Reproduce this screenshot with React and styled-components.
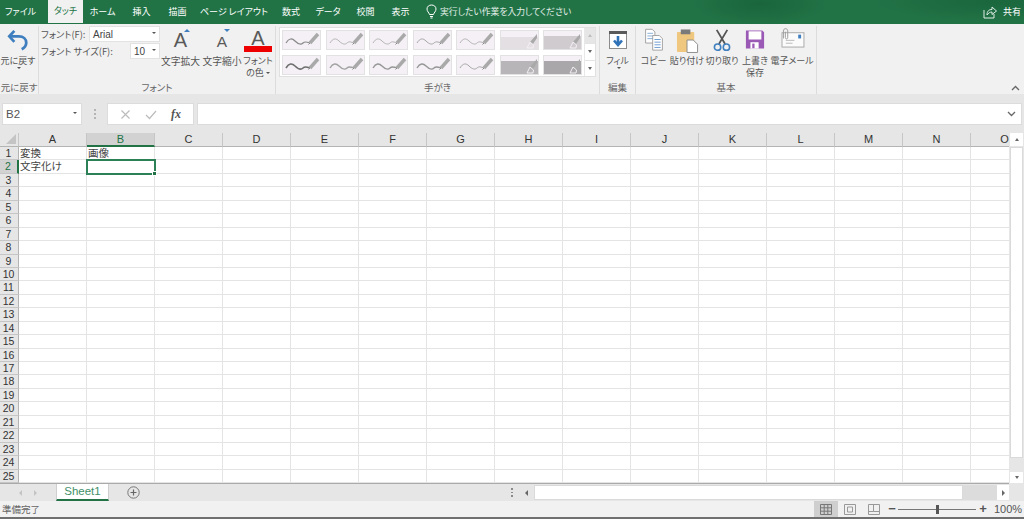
import React from "react";
import styled, { createGlobalStyle } from "styled-components";

const GlobalStyle = createGlobalStyle`
  html, body { margin: 0; padding: 0; overflow: hidden; background: #f1f1f1; }
  * { box-sizing: border-box; }
`;

const JP = `"Noto Sans CJK JP", "Noto Sans", sans-serif`;
const GREEN = "#217346";
const COL_W = 68;
const ROW_H = 13.44;

const Page = styled.div`
  width: 1024px;
  height: 519px;
  display: flex;
  flex-direction: column;
  overflow: hidden;
  font-family: ${JP};
  font-feature-settings: "palt";
  color: #555;
`;

/* title + tabs */
const TabBar = styled.div`
  height: 24px;
  flex: none;
  display: flex;
  align-items: stretch;
  color: #fff;
  font-size: 9px;
  background:
    radial-gradient(ellipse 70px 22px at 760px 4px, rgba(0, 50, 25, 0.22), transparent),
    radial-gradient(ellipse 120px 20px at 990px 2px, rgba(0, 50, 25, 0.2), transparent),
    ${GREEN};
`;
const Tab = styled.div`
  width: ${(p) => p.$w}px;
  margin-right: ${(p) => p.$mr || 0}px;
  padding-bottom: 2px;
  display: flex;
  align-items: center;
  justify-content: center;
  ${(p) => p.$active && `background:#f1f1f1;color:${GREEN};margin-bottom:1px;`}
`;
const TellMe = styled.div`
  display: flex;
  align-items: center;
  gap: 3px;
  margin-left: 8px;
  padding-bottom: 1px;
  font-size: 8.8px;
  color: #e4efe9;
`;
const Share = styled.div`
  margin-left: auto;
  padding: 0 3px 1px 0;
  display: flex;
  align-items: center;
  gap: 6px;
`;

/* ribbon */
const Ribbon = styled.div`
  height: 70px;
  flex: none;
  display: flex;
  background: #f1f1f1;
  position: relative;
`;
const Group = styled.div`
  width: ${(p) => p.$w}px;
  flex: none;
  display: flex;
  flex-direction: column;
  margin-top: 2px;
  border-right: 1px solid #dcdcdc;
`;
const GroupBody = styled.div`
  flex: 1;
  display: flex;
  min-height: 0;
  padding-left: ${(p) => p.$pl || 0}px;
`;
const GroupLabel = styled.div`
  height: 14px;
  font-size: 9.5px;
  line-height: 14px;
  text-align: center;
  color: #666;
`;
const BigButton = styled.div`
  width: ${(p) => p.$w}px;
  flex: none;
  display: flex;
  flex-direction: column;
  align-items: center;
  font-size: ${(p) => p.$fs || 9}px;
  line-height: 12px;
  text-align: center;
  white-space: nowrap;
  color: #555;
`;
const IconSlot = styled.div`
  height: 29px;
  flex: none;
  align-self: stretch;
  padding-top: ${(p) => p.$pt || 0}px;
  display: flex;
  align-items: flex-start;
  justify-content: center;
  position: relative;
`;
const Caret = styled.span`
  display: inline-block;
  width: 0;
  height: 0;
  margin: 0 0 2px 2px;
  border: 2px solid transparent;
  border-top: 2.5px solid #555;
  border-bottom: 0;
`;
const FontForm = styled.div`
  width: 121px;
  flex: none;
  padding-left: 2px;
  display: flex;
  flex-direction: column;
  gap: 1px;
`;
const FormRow = styled.div`
  height: 16px;
  display: flex;
  align-items: center;
  justify-content: space-between;
  font-size: 9.3px;
  white-space: nowrap;
`;
const Select = styled.div`
  width: ${(p) => p.$w}px;
  height: 16px;
  background: #fff;
  border: 1px solid #e2e2e2;
  display: flex;
  align-items: center;
  justify-content: space-between;
  padding: 0 3px;
  font: 10px "Liberation Sans", sans-serif;
  color: #444;
`;
const LetterA = styled.div`
  font: 500 ${(p) => p.$size}px/1 "Liberation Sans", sans-serif;
  color: #595959;
  position: relative;
`;
const Pointer = styled.span`
  position: absolute;
  top: ${(p) => p.$top}px;
  right: -3px;
  width: 0;
  height: 0;
  border: 3px solid transparent;
  ${(p) => (p.$up ? "border-top:0;border-bottom:3px solid #3f7fbf;" : "border-bottom:0;border-top:3px solid #3f7fbf;")}
`;
const RedBar = styled.div`
  position: absolute;
  left: 1px;
  right: 1px;
  top: 20px;
  height: 6px;
  background: #ee0000;
`;
const Gallery = styled.div`
  margin: 1px 0 2px 3px;
  width: 317px;
  height: 50px;
  background: #fff;
  border: 1px solid #e0e0e0;
  display: flex;
`;
const SwatchGrid = styled.div`
  width: 304px;
  padding: 2px 0 0 2px;
  display: grid;
  grid-template-columns: repeat(7, 39px);
  grid-template-rows: 20px 20px;
  column-gap: 4.5px;
  row-gap: 5px;
`;
const Swatch = styled.svg`
  display: block;
  width: 39px;
  height: 20px;
  background: #f4f0f5;
  border: 1px solid #e2e2e2;
`;
const GalleryScroll = styled.div`
  flex: 1;
  display: flex;
  flex-direction: column;
  border-left: 1px solid #e8e8e8;
`;
const GalleryBtn = styled.div`
  flex: 1;
  display: flex;
  align-items: center;
  justify-content: center;
  background: ${(p) => (p.$off ? "#e6e6e6" : "#fff")};
  border-bottom: 1px solid #e4e4e4;
  &:last-child { border-bottom: 0; }
`;
const Tri = styled.span`
  width: 0;
  height: 0;
  border-left: 2.5px solid transparent;
  border-right: 2.5px solid transparent;
  ${(p) => (p.$up ? `border-bottom:3px solid ${p.$c || "#666"};` : `border-top:3px solid ${p.$c || "#666"};`)}
`;
const Collapse = styled.svg`
  position: absolute;
  right: 4px;
  bottom: 3px;
`;

/* formula bar */
const FormulaBar = styled.div`
  height: 39px;
  flex: none;
  display: flex;
  background: #e6e6e6;
  padding: 9px 2px 8px 2px;
  align-items: stretch;
`;
const NameBox = styled.div`
  width: 80px;
  background: #fff;
  border: 1px solid #dcdcdc;
  display: flex;
  align-items: center;
  justify-content: space-between;
  padding: 0 4px 0 3px;
  font: 11.5px "Liberation Sans", sans-serif;
  color: #555;
`;
const Dots = styled.div`
  width: 25px;
  display: flex;
  flex-direction: column;
  align-items: center;
  justify-content: center;
  gap: 2px;
  & > i { width: 2px; height: 2px; background: #b4b4b4; display: block; }
`;
const FxBox = styled.div`
  width: 87px;
  background: #fff;
  border: 1px solid #dcdcdc;
  display: flex;
  align-items: center;
  justify-content: space-around;
  padding: 0 5px;
`;
const FxText = styled.span`
  font: italic 700 12px "Liberation Serif", serif;
  color: #555;
`;
const FormulaInput = styled.div`
  flex: 1;
  margin-left: 3px;
  background: #fff;
  border: 1px solid #dcdcdc;
  display: flex;
  align-items: center;
  justify-content: flex-end;
  padding-right: 5px;
`;

/* sheet */
const SheetArea = styled.div`
  height: 351px;
  flex: none;
  display: flex;
  background: #fff;
`;
const Cells = styled.div`
  width: 1009px;
  flex: none;
  overflow: hidden;
  display: grid;
  grid-template-columns: 19px repeat(15, ${COL_W}px);
  grid-template-rows: 14px repeat(25, ${ROW_H}px);
  border-bottom: 1px solid #aaa;
`;
const Corner = styled.div`
  background: #e6e6e6;
  border-right: 1px solid #c6c6c6;
  border-bottom: 1px solid #b4b4b4;
  position: relative;
  &::after {
    content: "";
    position: absolute;
    right: 2px;
    bottom: 2px;
    border-left: 10px solid transparent;
    border-bottom: 10px solid #c4c4c4;
  }
`;
const ColHead = styled.div`
  background: ${(p) => (p.$sel ? "#d2d2d2" : "#e6e6e6")};
  color: ${(p) => (p.$sel ? GREEN : "#333")};
  border-right: 1px solid #c6c6c6;
  border-bottom: ${(p) => (p.$sel ? `2px solid ${GREEN}` : "1px solid #b4b4b4")};
  font: 11px/13px "Liberation Sans", sans-serif;
  text-align: center;
`;
const RowHead = styled.div`
  background: ${(p) => (p.$sel ? "#d2d2d2" : "#e6e6e6")};
  color: ${(p) => (p.$sel ? GREEN : "#333")};
  border-right: ${(p) => (p.$sel ? `2px solid ${GREEN}` : "1px solid #b4b4b4")};
  border-bottom: 1px solid #c6c6c6;
  font: 500 10.5px/13px "Liberation Sans", sans-serif;
  text-align: center;
  padding-right: 1px;
  overflow: hidden;
`;
const Cell = styled.div`
  border-right: 1px solid #e4e4e4;
  border-bottom: 1px solid #e4e4e4;
  font-size: 10.5px;
  line-height: 12px;
  padding-left: 1px;
  color: #444;
  white-space: nowrap;
  position: relative;
  ${(p) => p.$sel && `outline:2px solid #2c8055;outline-offset:-1px;z-index:1;`}
`;
const Handle = styled.span`
  position: absolute;
  right: -3px;
  bottom: -3px;
  width: 5px;
  height: 5px;
  background: ${GREEN};
  border: 1px solid #fff;
`;
const VScroll = styled.div`
  flex: 1;
  display: flex;
  flex-direction: column;
  background: #e6e6e6;
  padding: 0 1px;
`;
const VBtn = styled.div`
  height: ${(p) => p.$h}px;
  background: #fff;
  display: flex;
  align-items: center;
  justify-content: center;
  border-bottom: 1px solid #e6e6e6;
`;
const VThumb = styled.div`
  height: 311px;
  background: #fff;
  border: 1px solid #dadada;
`;
const VGap = styled.div`
  flex: 1;
`;

/* tabs row */
const SheetBar = styled.div`
  height: 17px;
  flex: none;
  display: flex;
  align-items: stretch;
  background: #e6e6e6;
`;
const NavArrows = styled.div`
  width: 56px;
  display: flex;
  align-items: center;
  justify-content: center;
  gap: 12px;
`;
const NavTri = styled.span`
  width: 0;
  height: 0;
  border-top: 3px solid transparent;
  border-bottom: 3px solid transparent;
  ${(p) => (p.$left ? `border-right:3px solid ${p.$c};` : `border-left:3px solid ${p.$c};`)}
`;
const SheetTab = styled.div`
  width: 53px;
  background: #fff;
  color: #3f8f68;
  border-left: 1px solid #cfcfcf;
  border-right: 1px solid #cfcfcf;
  border-bottom: 2px solid ${GREEN};
  font: 11.5px/15px "Liberation Sans", sans-serif;
  text-align: center;
`;
const AddSheet = styled.div`
  width: 48px;
  display: flex;
  align-items: center;
  justify-content: center;
`;
const Splitter = styled.div`
  margin-left: 349px;
  width: 12px;
  display: flex;
  flex-direction: column;
  align-items: center;
  justify-content: center;
  gap: 2px;
  & > i { width: 1.5px; height: 1.5px; background: #8a8a8a; display: block; }
`;
const HScroll = styled.div`
  flex: 1;
  display: flex;
  align-items: stretch;
  padding: 1px 0;
`;
const HBtn = styled.div`
  width: ${(p) => p.$w}px;
  background: ${(p) => (p.$white ? "#fff" : "#e6e6e6")};
  display: flex;
  align-items: center;
  justify-content: center;
`;
const HThumb = styled.div`
  width: 429px;
  background: #fff;
  border: 1px solid #dadada;
`;
const HGap = styled.div`
  width: 34px;
  background: #dcdcdc;
`;
const HEnd = styled.div`
  flex: 1;
`;

/* status */
const StatusBar = styled.div`
  height: 16px;
  flex: none;
  display: flex;
  align-items: center;
  background: #f1f1f1;
  font-size: 9.5px;
  padding-left: 2px;
  color: #666;
`;
const ViewBtns = styled.div`
  margin-left: auto;
  height: 100%;
  display: flex;
`;
const ViewBtn = styled.div`
  width: 24px;
  display: flex;
  align-items: center;
  justify-content: center;
  background: ${(p) => (p.$sel ? "#cfcfcf" : "transparent")};
`;
const Zoom = styled.div`
  width: 138px;
  height: 100%;
  display: flex;
  align-items: center;
  padding-left: 1.5px;
  font: 11px "Liberation Sans", sans-serif;
  color: #555;
`;
const Slider = styled.div`
  width: 78px;
  height: 1px;
  margin: 0 2.5px 0 1.5px;
  background: #777;
  position: relative;
`;
const SliderThumb = styled.span`
  position: absolute;
  left: 38px;
  top: -4px;
  width: 3px;
  height: 9px;
  background: #555;
`;
const ZoomSign = styled.span`
  width: 9px;
  font-size: 13px;
  font-weight: 700;
  line-height: 14px;
  text-align: center;
  color: #555;
`;
const Percent = styled.span`
  margin-left: 6.5px;
`;
const BottomLine = styled.div`
  flex: 1;
  background: #6f6f6f;
`;

/* drawings */
const Undo = () => (
  <svg width="22" height="24" viewBox="0 0 24 26">
    <path d="M8 3 L2.5 9 L8 15" fill="none" stroke="#3f7fbf" strokeWidth="3" />
    <path d="M3 9 H13 C18 9 21 12 21 16 C21 19 19 21.5 16 23" fill="none" stroke="#3f7fbf" strokeWidth="3" />
  </svg>
);
const FillIcon = () => (
  <svg width="20" height="20" viewBox="0 0 20 20">
    <rect x="1.5" y="1.5" width="17" height="17" fill="#fff" stroke="#8c8c8c" />
    <rect x="1" y="1" width="18" height="3" fill="#5a5a5a" />
    <path d="M10 6 V14 M6 10.5 L10 15 L14 10.5" fill="none" stroke="#2f72b8" strokeWidth="2.6" />
  </svg>
);
const CopyIcon = () => (
  <svg width="20" height="23" viewBox="0 0 22 26">
    <path d="M1.5 1.5 H9 L12 4.5 V17 H1.5 Z" fill="#fff" stroke="#9a9a9a" />
    <path d="M3.5 6 H10 M3.5 9 H10 M3.5 12 H10" stroke="#7fa8d4" />
    <path d="M9.5 8.5 H17 L20.5 12 V25 H9.5 Z" fill="#fff" stroke="#9a9a9a" />
    <path d="M11.5 13 H18.5 M11.5 16 H18.5 M11.5 19 H18.5 M11.5 22 H18.5" stroke="#5f93cc" />
  </svg>
);
const PasteIcon = () => (
  <svg width="23" height="25" viewBox="0 0 24 26">
    <rect x="1" y="4" width="18" height="21" rx="1" fill="#f0c77f" />
    <rect x="5" y="1.5" width="10" height="5" fill="#7a7a7a" />
    <path d="M11.5 12.5 H18 L22.5 17 V25.5 H11.5 Z" fill="#fff" stroke="#8c8c8c" />
  </svg>
);
const ScissorsIcon = () => (
  <svg width="20" height="23" viewBox="0 0 22 26">
    <path d="M5 1 L14.5 17 M17 1 L7.5 17" stroke="#555" strokeWidth="2" fill="none" />
    <circle cx="6" cy="20.5" r="3.6" fill="none" stroke="#3f7fbf" strokeWidth="1.8" />
    <circle cx="16" cy="20.5" r="3.6" fill="none" stroke="#3f7fbf" strokeWidth="1.8" />
  </svg>
);
const SaveIcon = () => (
  <svg width="20" height="21" viewBox="0 0 22 22">
    <path d="M1 1 H19 L21 3 V21 H1 Z" fill="#9b59b6" />
    <rect x="4" y="2" width="14" height="9" fill="#fff" />
    <rect x="6" y="14" width="9" height="7" fill="#fff" />
    <rect x="8" y="15.5" width="2.5" height="5" fill="#9b59b6" />
  </svg>
);
const MailIcon = () => (
  <svg width="25" height="21" viewBox="0 0 26 22">
    <rect x="2" y="6" width="23" height="15" fill="#fbfbfb" stroke="#a8a8a8" />
    <rect x="19" y="8" width="3" height="4" fill="#3f7fbf" />
    <path d="M6 14 H15 M6 17 H13" stroke="#b8b8b8" />
    <path d="M3.5 12 V4 C3.5 1 8 1 8 4 V11 C8 13 5.5 13 5.5 11 V5" fill="none" stroke="#9a9a9a" />
  </svg>
);
const ShareIcon = () => (
  <svg width="14" height="14" viewBox="0 0 14 14">
    <path d="M1 5 V13 H11 V9" fill="none" stroke="#dfeee6" />
    <path d="M4 10 C4 6 6 4.5 9 4.5 V2 L13.5 6 L9 9.5 V7 C7 7 5.5 8 4 10 Z" fill="none" stroke="#dfeee6" />
  </svg>
);
const Bulb = () => (
  <svg width="11" height="15" viewBox="0 0 11 15">
    <path d="M3.5 10.5 C3 8.5 1 7.5 1 5 C1 2.5 3 1 5.5 1 C8 1 10 2.5 10 5 C10 7.5 8 8.5 7.5 10.5 Z" fill="none" stroke="#fff" />
    <path d="M4 12.5 H7 M4.5 14 H6.5" stroke="#fff" />
  </svg>
);

const WAVE = "M3 12 C6 7 9 7 12 10 C15 13 18 14 20 12 C22 10 24 11 27 12";

function PenSwatch({ color, width }) {
  return (
    <Swatch viewBox="0 0 37 18">
      <path d={WAVE} fill="none" stroke={color} strokeWidth={width} />
      <path d="M27 12 L35 3" stroke="#a9a9a9" strokeWidth="3.4" />
      <path d="M25.5 13.5 L27 12" stroke="#888" strokeWidth="1" />
    </Swatch>
  );
}
function MarkerSwatch({ color, top }) {
  return (
    <Swatch viewBox="0 0 37 18">
      <rect x="0" y={top} width="37" height={18 - top} fill={color} />
      <path d="M29 11 L36 3 L36 7 L32 13 Z" fill="#a9a9a9" />
      <path d="M26 17 L29 11 L32.5 14 L32 17 Z" fill="none" stroke="#f4f0f5" strokeWidth="1" />
    </Swatch>
  );
}

const PENS_TOP = [
  ["#8a8a8a", 1.2], ["#b4b4b4", 1], ["#b4b4b4", 1], ["#a6a6a6", 1], ["#b4b4b4", 1],
];
const PENS_BOTTOM = [
  ["#6e6e6e", 1.6], ["#a2a2a2", 1.4], ["#969696", 1.4], ["#969696", 1.4], ["#a6a6a6", 1],
];

const COLS = "ABCDEFGHIJKLMNO".split("");
const ROWS = Array.from({ length: 25 }, (_, i) => i + 1);
const CONTENT = { A1: "変換", B1: "画像", A2: "文字化け" };
const TABS = [
  ["ファイル", 41, 7],
  ["タッチ", 35, 0, true],
  ["ホーム", 39],
  ["挿入", 39],
  ["描画", 33],
  ["ページ レイアウト", 80],
  ["数式", 34],
  ["データ", 40],
  ["校閲", 35],
  ["表示", 35],
];

export default function App() {
  return (
    <Page>
      <GlobalStyle />
      <TabBar>
        {TABS.map(([name, w, mr, active]) => (
          <Tab key={name} $w={w} $mr={mr} $active={active}>{name}</Tab>
        ))}
        <TellMe>
          <Bulb />
          実行したい作業を入力してください
        </TellMe>
        <Share>
          <ShareIcon />
          共有
        </Share>
      </TabBar>

      <Ribbon>
        <Group $w={39}>
          <GroupBody>
            <BigButton $w={36}>
              <IconSlot $pt={2}><Undo /></IconSlot>
              元に戻す
              <Caret />
            </BigButton>
          </GroupBody>
          <GroupLabel>元に戻す</GroupLabel>
        </Group>

        <Group $w={237}>
          <GroupBody>
            <FontForm>
              <FormRow>
                フォント(F):
                <Select $w={71}>Arial<Caret /></Select>
              </FormRow>
              <FormRow>
                フォント サイズ(F):
                <Select $w={30}>10<Caret /></Select>
              </FormRow>
            </FontForm>
            <BigButton $w={41} $fs={9.8}>
              <IconSlot $pt={4}>
                <LetterA $size={20}>A<Pointer $up $top={-1} /></LetterA>
              </IconSlot>
              文字拡大
            </BigButton>
            <BigButton $w={42} $fs={9.8}>
              <IconSlot $pt={8}>
                <LetterA $size={15.5}>A<Pointer $top={-5} /></LetterA>
              </IconSlot>
              文字縮小
            </BigButton>
            <BigButton $w={30}>
              <IconSlot $pt={2}>
                <LetterA $size={20}>A</LetterA>
                <RedBar />
              </IconSlot>
              フォント
              <span>の色<Caret /></span>
            </BigButton>
          </GroupBody>
          <GroupLabel>フォント</GroupLabel>
        </Group>

        <Group $w={324}>
          <GroupBody>
            <Gallery>
              <SwatchGrid>
                {PENS_TOP.map(([c, w], i) => <PenSwatch key={i} color={c} width={w} />)}
                <MarkerSwatch color="#e3dfe2" top={6} />
                <MarkerSwatch color="#cfcbce" top={5} />
                {PENS_BOTTOM.map(([c, w], i) => <PenSwatch key={i} color={c} width={w} />)}
                <MarkerSwatch color="#b7b5b7" top={5} />
                <MarkerSwatch color="#a9a7a9" top={5} />
              </SwatchGrid>
              <GalleryScroll>
                <GalleryBtn $off><Tri $up $c="#bdbdbd" /></GalleryBtn>
                <GalleryBtn><Tri /></GalleryBtn>
                <GalleryBtn><Tri /></GalleryBtn>
              </GalleryScroll>
            </Gallery>
          </GroupBody>
          <GroupLabel>手がき</GroupLabel>
        </Group>

        <Group $w={36}>
          <GroupBody>
            <BigButton $w={35}>
              <IconSlot $pt={4}><FillIcon /></IconSlot>
              フィル
              <Caret />
            </BigButton>
          </GroupBody>
          <GroupLabel>編集</GroupLabel>
        </Group>

        <Group $w={181}>
          <GroupBody $pl={4}>
            <BigButton $w={27}>
              <IconSlot $pt={2}><CopyIcon /></IconSlot>
              コピー
            </BigButton>
            <BigButton $w={40}>
              <IconSlot $pt={2}><PasteIcon /></IconSlot>
              貼り付け
            </BigButton>
            <BigButton $w={30}>
              <IconSlot $pt={3}><ScissorsIcon /></IconSlot>
              切り取り
            </BigButton>
            <BigButton $w={36}>
              <IconSlot $pt={3}><SaveIcon /></IconSlot>
              上書き
              <span>保存</span>
            </BigButton>
            <BigButton $w={38}>
              <IconSlot $pt={1}><MailIcon /></IconSlot>
              電子メール
            </BigButton>
          </GroupBody>
          <GroupLabel>基本</GroupLabel>
        </Group>

        <Collapse width="9" height="6" viewBox="0 0 9 6">
          <path d="M1 5 L4.5 1.5 L8 5" fill="none" stroke="#666" strokeWidth="1.3" />
        </Collapse>
      </Ribbon>

      <FormulaBar>
        <NameBox>B2<Caret /></NameBox>
        <Dots><i /><i /><i /></Dots>
        <FxBox>
          <svg width="11" height="11" viewBox="0 0 11 11">
            <path d="M1.5 1.5 L9.5 9.5 M9.5 1.5 L1.5 9.5" stroke="#bcbcbc" strokeWidth="1.2" />
          </svg>
          <svg width="12" height="11" viewBox="0 0 12 11">
            <path d="M1 6 L4.5 9.5 L11 2" fill="none" stroke="#bcbcbc" strokeWidth="1.2" />
          </svg>
          <FxText>fx</FxText>
        </FxBox>
        <FormulaInput>
          <svg width="9" height="6" viewBox="0 0 9 6">
            <path d="M1 1 L4.5 4.5 L8 1" fill="none" stroke="#666" strokeWidth="1.3" />
          </svg>
        </FormulaInput>
      </FormulaBar>

      <SheetArea>
        <Cells>
          <Corner />
          {COLS.map((c) => <ColHead key={c} $sel={c === "B"}>{c}</ColHead>)}
          {ROWS.map((r) => (
            <React.Fragment key={r}>
              <RowHead $sel={r === 2}>{r}</RowHead>
              {COLS.map((c) => {
                const sel = c === "B" && r === 2;
                return (
                  <Cell key={c} $sel={sel}>
                    {CONTENT[c + r]}
                    {sel && <Handle />}
                  </Cell>
                );
              })}
            </React.Fragment>
          ))}
        </Cells>
        <VScroll>
          <VBtn $h={14}><Tri $up /></VBtn>
          <VThumb />
          <VGap />
          <VBtn $h={12}><Tri /></VBtn>
        </VScroll>
      </SheetArea>

      <SheetBar>
        <NavArrows>
          <NavTri $left $c="#c4c4c4" />
          <NavTri $c="#c4c4c4" />
        </NavArrows>
        <SheetTab>Sheet1</SheetTab>
        <AddSheet>
          <svg width="13" height="13" viewBox="0 0 13 13">
            <circle cx="6.5" cy="6.5" r="5.7" fill="none" stroke="#777" />
            <path d="M3.5 6.5 H9.5 M6.5 3.5 V9.5" stroke="#666" strokeWidth="1.2" />
          </svg>
        </AddSheet>
        <Splitter><i /><i /><i /></Splitter>
        <HScroll>
          <HBtn $w={16}><NavTri $left $c="#666" /></HBtn>
          <HThumb />
          <HGap />
          <HBtn $w={12} $white><NavTri $c="#666" /></HBtn>
          <HEnd />
        </HScroll>
      </SheetBar>

      <StatusBar>
        準備完了
        <ViewBtns>
          <ViewBtn $sel>
            <svg width="12" height="11" viewBox="0 0 12 11">
              <path d="M.5.5H11.5V10.5H.5Z M.5 3.8H11.5 M.5 7.2H11.5 M4.2.5V10.5 M7.8.5V10.5" fill="none" stroke="#777" />
            </svg>
          </ViewBtn>
          <ViewBtn>
            <svg width="12" height="11" viewBox="0 0 12 11">
              <path d="M.5.5H11.5V10.5H.5Z M3.5 3H8.5V8H3.5Z" fill="none" stroke="#999" />
            </svg>
          </ViewBtn>
          <ViewBtn>
            <svg width="12" height="11" viewBox="0 0 12 11">
              <path d="M.5.5H11.5V10.5H.5Z M.5 7.5H5.5V.5 M5.5 7.5H11.5" fill="none" stroke="#999" />
            </svg>
          </ViewBtn>
        </ViewBtns>
        <Zoom>
          <ZoomSign>−</ZoomSign>
          <Slider><SliderThumb /></Slider>
          <ZoomSign>+</ZoomSign>
          <Percent>100%</Percent>
        </Zoom>
      </StatusBar>
      <BottomLine />
    </Page>
  );
}
